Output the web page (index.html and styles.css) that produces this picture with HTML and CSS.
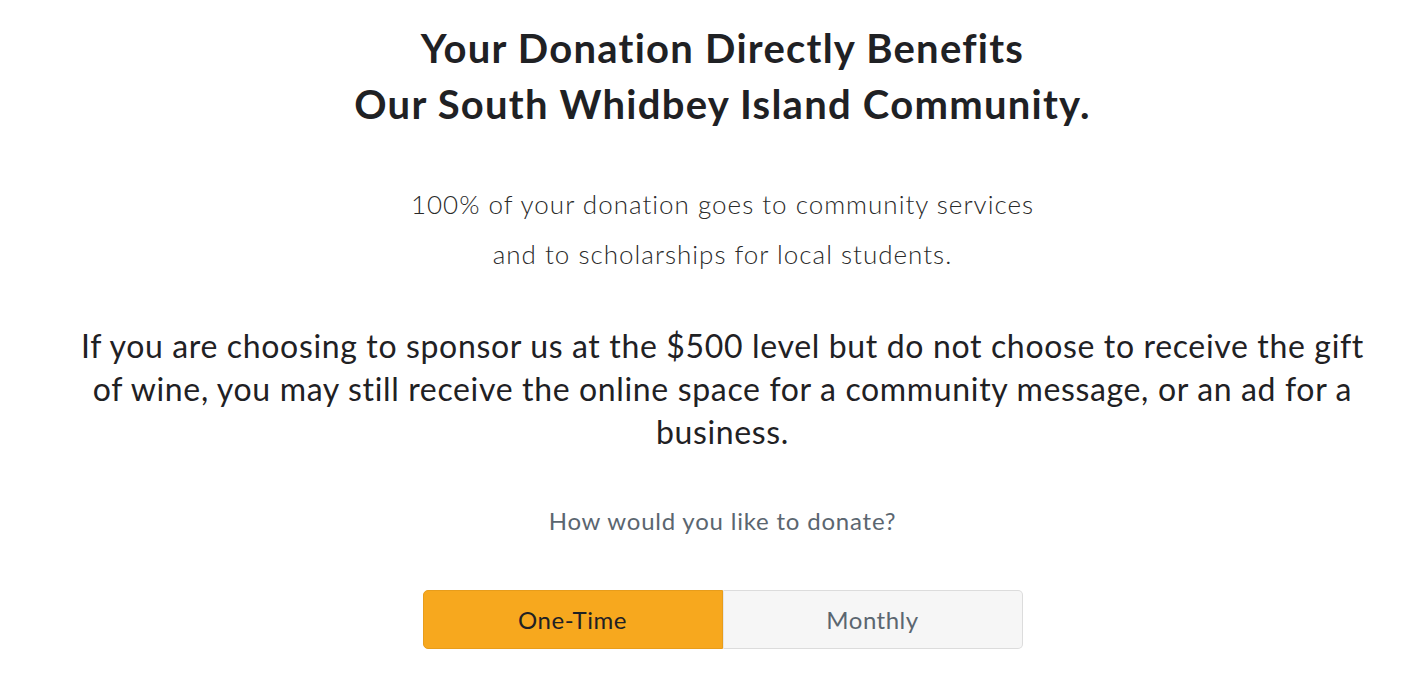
FILE: index.html
```html
<!DOCTYPE html>
<html>
<head>
<meta charset="utf-8">
<link rel="stylesheet" href="styles.css">
</head>
<body>
<main class="page">
  <h1 class="title">Your Donation Directly Benefits<br>Our South Whidbey Island Community.</h1>
  <p class="lead">100% of your donation goes to community services<br>and to scholarships for local students.</p>
  <p class="note">If you are choosing to sponsor us at the $500 level but do not choose to receive the gift of wine, you may still receive the online space for a community message, or an ad for a business.</p>
  <p class="question">How would you like to donate?</p>
  <div class="toggle">
    <button class="opt opt-active">One-Time</button>
    <button class="opt">Monthly</button>
  </div>
</main>
</body>
</html>
```
FILE: styles.css
```css
html, body { margin: 0; padding: 0; background: #fff; }
body { font-family: Lato, "Noto Sans", sans-serif; color: #1f2124; }
.page {
  padding: 20px 40px 0 80px;
  display: flex;
  flex-direction: column;
  align-items: center;
  text-align: center;
}
.title {
  margin: 0;
  font-size: 40px;
  line-height: 56px;
  font-weight: 700;
  letter-spacing: 1.25px;
}
.lead {
  margin: 47px 0 0;
  font-size: 26px;
  line-height: 50px;
  font-weight: 300;
  letter-spacing: 1px;
  color: #2a2a2a;
}
.note {
  margin: 45px 0 0;
  font-size: 32px;
  line-height: 43px;
  font-weight: 400;
  letter-spacing: 0.65px;
  width: 1300px;
}
.question {
  margin: 53px 0 0;
  font-size: 24px;
  line-height: 30px;
  font-weight: 400;
  letter-spacing: 0.8px;
  color: #5b6670;
}
.toggle {
  margin-top: 54px;
  display: flex;
  width: 600px;
  height: 59px;
}
.opt {
  flex: 1;
  font-family: inherit;
  font-size: 24px;
  letter-spacing: 0.5px;
  border: 1px solid #dcdcdc;
  background: #f6f6f6;
  color: #5b6670;
  border-radius: 0 5px 5px 0;
  border-left: 1px solid #e6e6e6;
}
.opt-active {
  background: #f7a81e;
  border: 1px solid #e89d1b;
  color: #1f2124;
  border-radius: 5px 0 0 5px;
}
```
